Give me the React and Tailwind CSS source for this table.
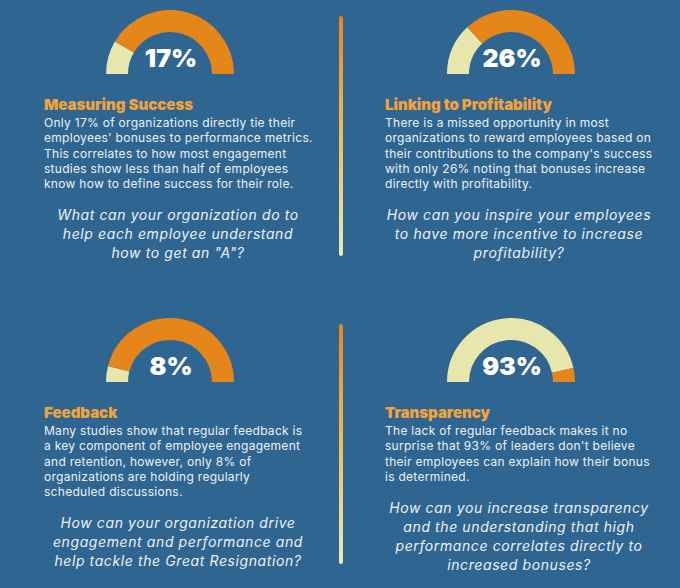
import React from "react";

const cards = [
  {
    pct: 17,
    title: "Measuring Success",
    body: [
      "Only 17% of organizations directly tie their",
      "employees' bonuses to performance metrics.",
      "This correlates to how most engagement",
      "studies show less than half of employees",
      "know how to define success for their role.",
    ],
    question: [
      "What can your organization do to",
      "help each employee understand",
      'how to get an "A"?',
    ],
  },
  {
    pct: 26,
    title: "Linking to Profitability",
    body: [
      "There is a missed opportunity in most",
      "organizations to reward employees based on",
      "their contributions to the company's success",
      "with only 26% noting that bonuses increase",
      "directly with profitability.",
    ],
    question: [
      "How can you inspire your employees",
      "to have more incentive to increase",
      "profitability?",
    ],
  },
  {
    pct: 8,
    title: "Feedback",
    body: [
      "Many studies show that regular feedback is",
      "a key component of employee engagement",
      "and retention, however, only 8% of",
      "organizations are holding regularly",
      "scheduled discussions.",
    ],
    question: [
      "How can your organization drive",
      "engagement and performance and",
      "help tackle the Great Resignation?",
    ],
  },
  {
    pct: 93,
    title: "Transparency",
    body: [
      "The lack of regular feedback makes it no",
      "surprise that 93% of leaders don't believe",
      "their employees can explain how their bonus",
      "is determined.",
    ],
    question: [
      "How can you increase transparency",
      "and the understanding that high",
      "performance correlates directly to",
      "increased bonuses?",
    ],
  },
];

const Gauge = ({ pct }) => {
  const cx = 64;
  const cy = 64;
  const r = 53;
  const a = Math.PI * (1 - pct / 100);
  const ex = cx + r * Math.cos(a);
  const ey = cy - r * Math.sin(a);
  return (
    <div className="relative w-[128px] h-[64px] ml-[62px]">
      <svg width="128" height="64" viewBox="0 0 128 64" className="block">
        <path
          d={`M ${cx - r} ${cy} A ${r} ${r} 0 0 1 ${ex} ${ey}`}
          fill="none"
          stroke="#e7e6ad"
          strokeWidth="22"
        />
        <path
          d={`M ${ex} ${ey} A ${r} ${r} 0 0 1 ${cx + r} ${cy}`}
          fill="none"
          stroke="#e5861a"
          strokeWidth="22"
        />
      </svg>
      <div className="absolute left-0 right-0 bottom-[3px] text-center text-white text-[25px] leading-none font-black font-['Inter',sans-serif] pl-[2px]">
        {pct}%
      </div>
    </div>
  );
};

const Card = ({ card }) => (
  <div className="w-[268px] pt-[10px]">
    <Gauge pct={card.pct} />
    <h2 className="mt-[22px] text-[15px] leading-[18px] font-black text-[#f2a23c] font-['Inter',sans-serif]">
      {card.title}
    </h2>
    <p className="mt-[1px] text-[12px] leading-[15.3px] tracking-[0.28px] whitespace-nowrap text-[#eef1f4] font-['Inter',sans-serif]">
      {card.body.map((l, i) => (
        <React.Fragment key={i}>
          {l}
          <br />
        </React.Fragment>
      ))}
    </p>
    <p className="mt-[15px] text-center text-[14px] leading-[18.8px] tracking-[0.6px] whitespace-nowrap italic text-[#eef1f4] font-['Inter',sans-serif]">
      {card.question.map((l, i) => (
        <React.Fragment key={i}>
          {l}
          <br />
        </React.Fragment>
      ))}
    </p>
  </div>
);

const Divider = () => (
  <div className="mt-[16px] w-[4px] h-[240px] rounded-full bg-gradient-to-b from-[#e5861a] via-[#f0bb5c] to-[#e9ebb4]" />
);

export default function App() {
  return (
    <div className="w-[680px] h-[588px] overflow-hidden bg-[#2f6591]">
      {[0, 2].map((start) => (
        <div key={start} className="flex h-[308px]">
          <div className="w-[339px] pl-[44px]">
            <Card card={cards[start]} />
          </div>
          <Divider />
          <div className="pl-[42px]">
            <Card card={cards[start + 1]} />
          </div>
        </div>
      ))}
    </div>
  );
}
